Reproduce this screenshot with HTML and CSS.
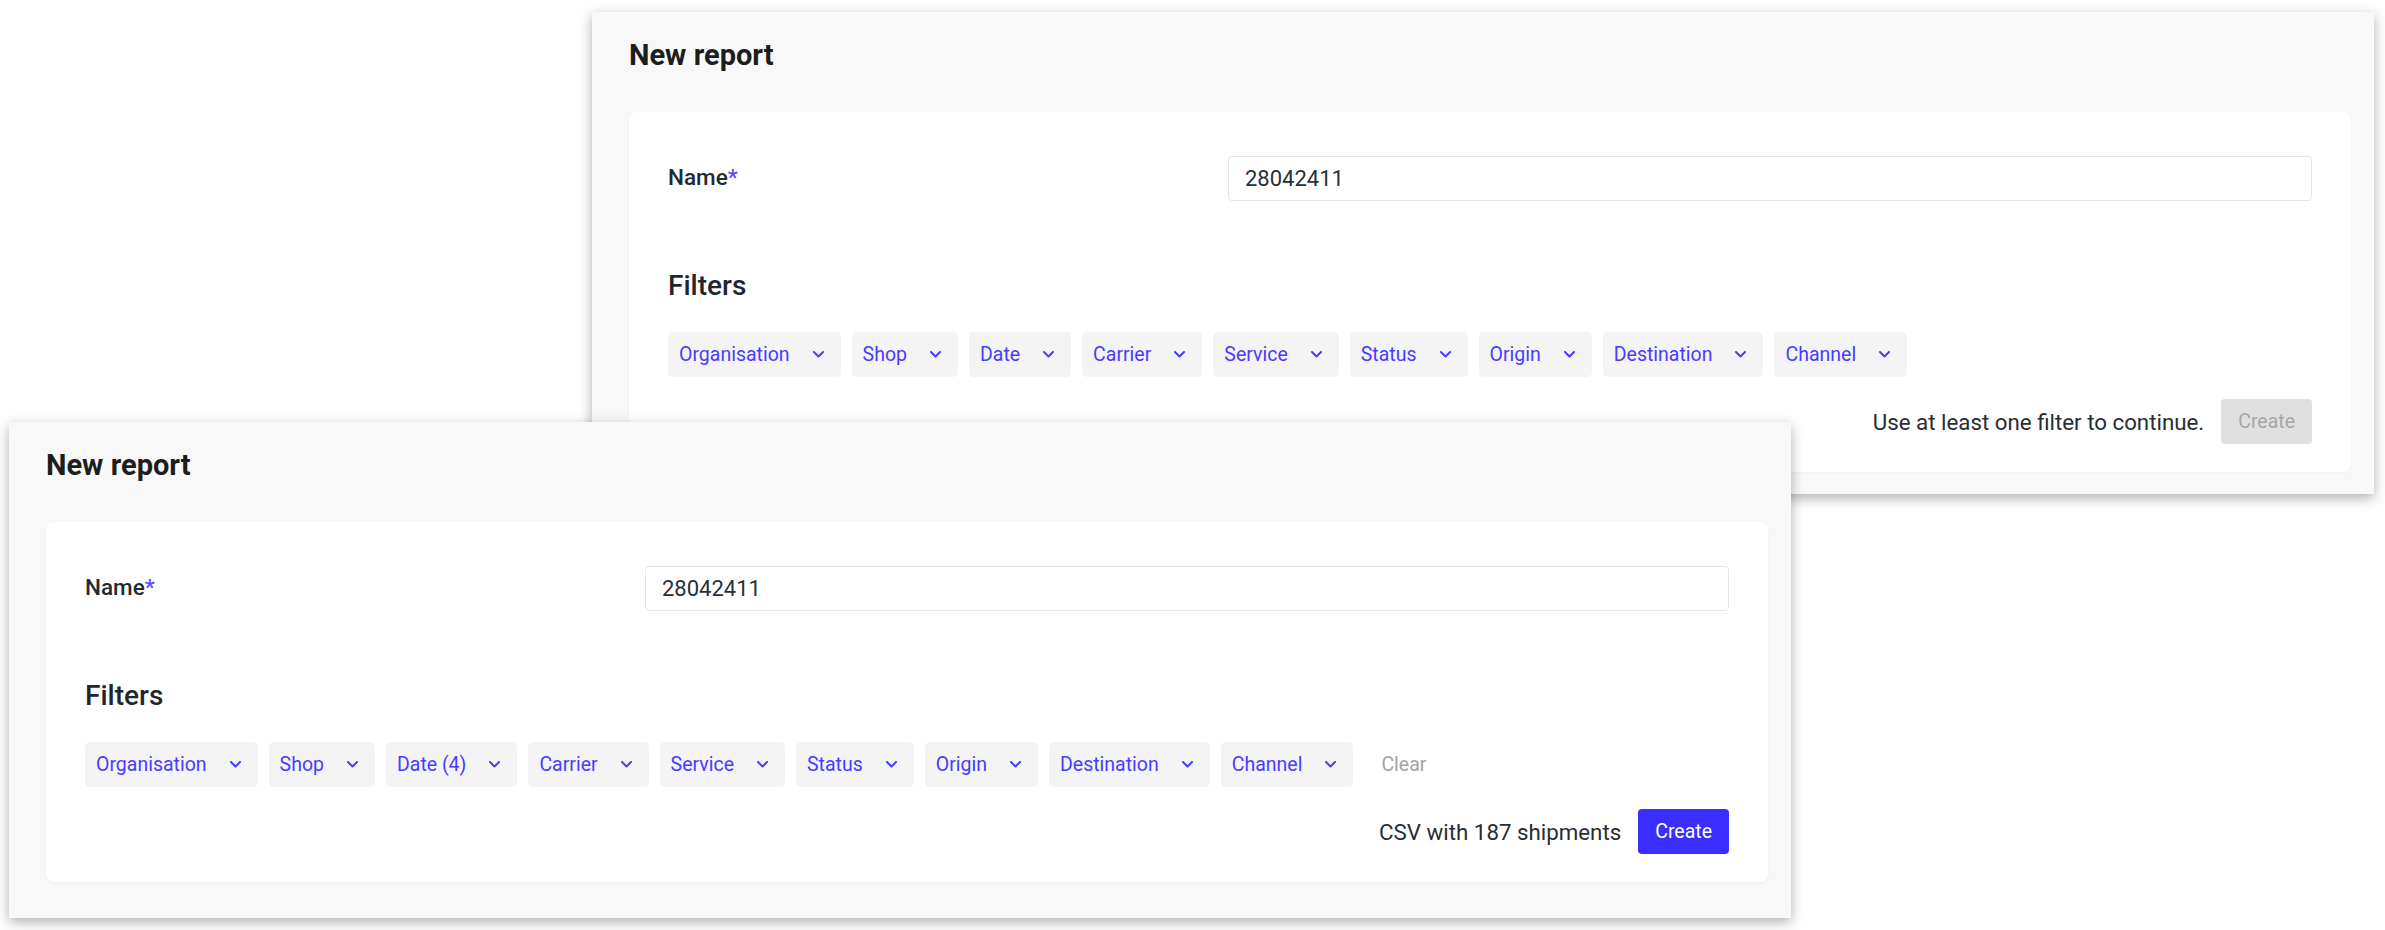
FILE: index.html
```html
<!DOCTYPE html>
<html lang="en">
<head>
  <meta charset="UTF-8" />
  <meta name="viewport" content="width=device-width, initial-scale=1.0"/>
  <title>New report</title>
  <link rel="stylesheet" href="styles.css">
</head>
<body>
  <!-- before a filter is picked -->
  <section class="window window-back">
    <h1 class="window-title">New report</h1>
    <div class="card">
      <div class="field">
        <label class="field-label" for="name-a">Name<span class="req">*</span></label>
        <input class="field-input" id="name-a" type="text" value="28042411" />
      </div>

      <h2 class="section-title">Filters</h2>
      <div class="filters">
        <button class="chip">Organisation <svg class="chev" viewBox="0 0 11 7"><path d="M1 1l4.5 4.5L10 1"/></svg></button>
        <button class="chip">Shop <svg class="chev" viewBox="0 0 11 7"><path d="M1 1l4.5 4.5L10 1"/></svg></button>
        <button class="chip">Date <svg class="chev" viewBox="0 0 11 7"><path d="M1 1l4.5 4.5L10 1"/></svg></button>
        <button class="chip">Carrier <svg class="chev" viewBox="0 0 11 7"><path d="M1 1l4.5 4.5L10 1"/></svg></button>
        <button class="chip">Service <svg class="chev" viewBox="0 0 11 7"><path d="M1 1l4.5 4.5L10 1"/></svg></button>
        <button class="chip">Status <svg class="chev" viewBox="0 0 11 7"><path d="M1 1l4.5 4.5L10 1"/></svg></button>
        <button class="chip">Origin <svg class="chev" viewBox="0 0 11 7"><path d="M1 1l4.5 4.5L10 1"/></svg></button>
        <button class="chip">Destination <svg class="chev" viewBox="0 0 11 7"><path d="M1 1l4.5 4.5L10 1"/></svg></button>
        <button class="chip">Channel <svg class="chev" viewBox="0 0 11 7"><path d="M1 1l4.5 4.5L10 1"/></svg></button>
      </div>

      <div class="actions">
        <span class="hint">Use at least one filter to continue.</span>
        <button class="btn-create" disabled>Create</button>
      </div>
    </div>
  </section>

  <!-- with a date filter set -->
  <section class="window window-front">
    <h1 class="window-title">New report</h1>
    <div class="card">
      <div class="field">
        <label class="field-label" for="name-b">Name<span class="req">*</span></label>
        <input class="field-input" id="name-b" type="text" value="28042411" />
      </div>

      <h2 class="section-title">Filters</h2>
      <div class="filters">
        <button class="chip">Organisation <svg class="chev" viewBox="0 0 11 7"><path d="M1 1l4.5 4.5L10 1"/></svg></button>
        <button class="chip">Shop <svg class="chev" viewBox="0 0 11 7"><path d="M1 1l4.5 4.5L10 1"/></svg></button>
        <button class="chip">Date (4) <svg class="chev" viewBox="0 0 11 7"><path d="M1 1l4.5 4.5L10 1"/></svg></button>
        <button class="chip">Carrier <svg class="chev" viewBox="0 0 11 7"><path d="M1 1l4.5 4.5L10 1"/></svg></button>
        <button class="chip">Service <svg class="chev" viewBox="0 0 11 7"><path d="M1 1l4.5 4.5L10 1"/></svg></button>
        <button class="chip">Status <svg class="chev" viewBox="0 0 11 7"><path d="M1 1l4.5 4.5L10 1"/></svg></button>
        <button class="chip">Origin <svg class="chev" viewBox="0 0 11 7"><path d="M1 1l4.5 4.5L10 1"/></svg></button>
        <button class="chip">Destination <svg class="chev" viewBox="0 0 11 7"><path d="M1 1l4.5 4.5L10 1"/></svg></button>
        <button class="chip">Channel <svg class="chev" viewBox="0 0 11 7"><path d="M1 1l4.5 4.5L10 1"/></svg></button>
        <button class="clear">Clear</button>
      </div>

      <div class="actions">
        <span class="hint">CSV with 187 shipments</span>
        <button class="btn-create">Create</button>
      </div>
    </div>
  </section>
</body>
</html>
```

FILE: styles.css
```css
* {
  box-sizing: border-box;
}

body {
  margin: 0;
  background: #ffffff;
  font-family: Roboto, 'Liberation Sans', sans-serif;
  color: #262b31;
  width: 2385px;
  height: 930px;
  position: relative;
  overflow: hidden;
}

.window {
  position: absolute;
  width: 1782px;
  background: #f8f8f8;
  box-shadow: 0 4px 12px rgba(0, 0, 0, 0.32);
  padding: 0 23px 0 37px;
}

.window-back {
  left: 592px;
  top: 12px;
  height: 482px;
}

.window-front {
  left: 9px;
  top: 422px;
  height: 496px;
}

.window-title {
  margin: 0;
  height: 100px;
  padding-top: 26px;
  font-size: 29px;
  line-height: 34px;
  font-weight: 700;
  color: #1d1d1d;
}

.card {
  background: #ffffff;
  border-radius: 8px;
  box-shadow: 0 1px 3px rgba(0, 0, 0, 0.04);
  height: 360px;
  padding: 44px 39px 0 39px;
}

.field {
  display: grid;
  grid-template-columns: 1fr 2fr;
  gap: 18px;
  align-items: start;
}

.field-label {
  font-size: 22.5px;
  font-weight: 500;
  line-height: 26px;
  padding-top: 8px;
  color: #222a32;
}

.req {
  color: #5a4bff;
}

.field-input {
  height: 45px;
  border: 1px solid #e3e5e8;
  border-radius: 4px;
  padding: 0 16px;
  font-family: inherit;
  font-size: 22px;
  color: #27303a;
  background: #ffffff;
  outline: none;
}

.section-title {
  margin: 68px 0 0;
  font-size: 28px;
  line-height: 34px;
  font-weight: 500;
  color: #1f262c;
}

.filters {
  display: flex;
  gap: 11px;
  margin-top: 29px;
}

.chip {
  display: flex;
  align-items: center;
  height: 45px;
  padding: 0 17px 0 11px;
  border: none;
  border-radius: 5px;
  background: #f4f4f5;
  color: #4a3bff;
  font-family: inherit;
  font-size: 19.5px;
  white-space: nowrap;
  cursor: pointer;
}

.chev {
  width: 11px;
  height: 7px;
  margin-left: 23px;
  fill: none;
  stroke: currentColor;
  stroke-width: 2;
  stroke-linecap: round;
  stroke-linejoin: round;
}

.clear {
  height: 45px;
  padding: 0 17px;
  border: none;
  background: none;
  color: #a3a3a3;
  font-family: inherit;
  font-size: 19.5px;
  cursor: pointer;
}

.actions {
  display: flex;
  justify-content: flex-end;
  align-items: center;
  gap: 17px;
  margin-top: 22px;
}

.hint {
  font-size: 22.3px;
  color: #282d33;
}

.btn-create {
  height: 45px;
  padding: 0 17px;
  border: none;
  border-radius: 4px;
  background: #3a2dff;
  color: #ffffff;
  font-family: inherit;
  font-size: 19.5px;
  cursor: pointer;
}

.btn-create:disabled {
  background: #e0e0e0;
  color: #a7a7a7;
  cursor: default;
}
```
